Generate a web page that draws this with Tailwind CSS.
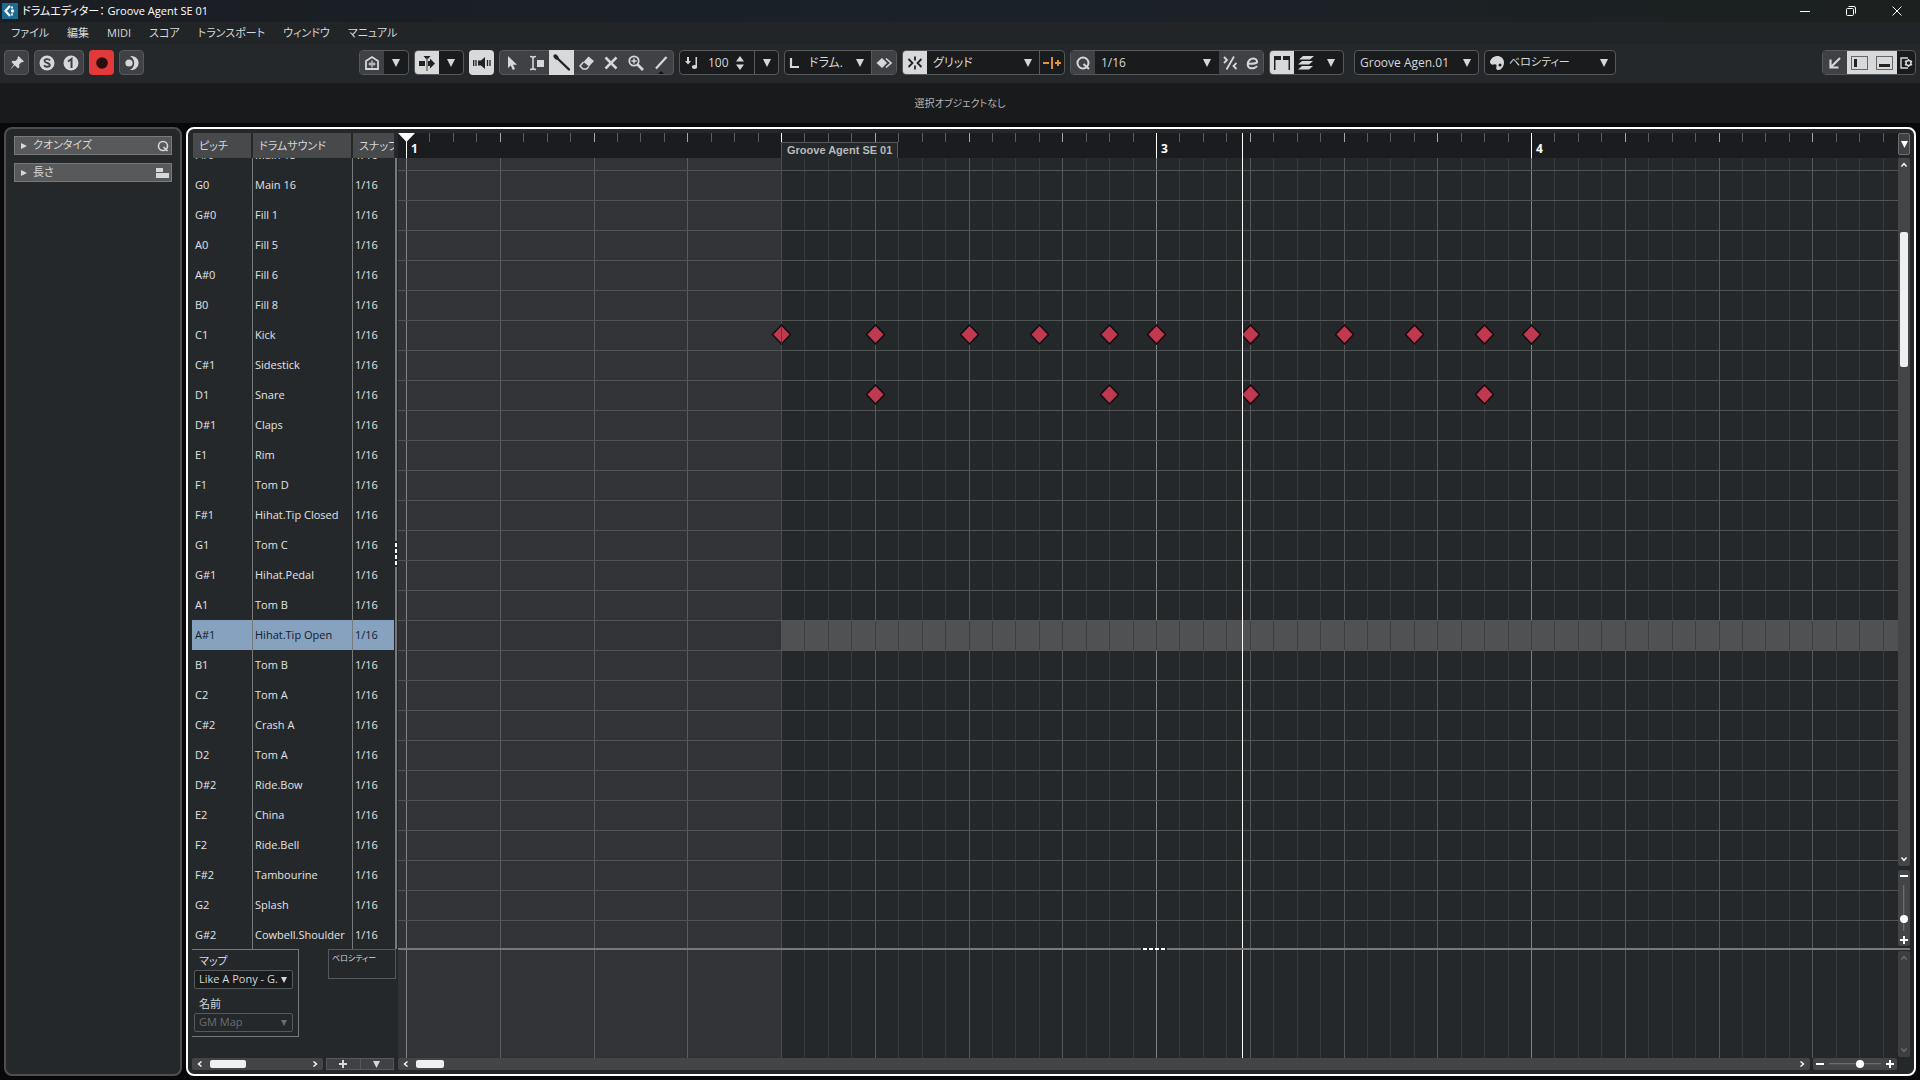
<!DOCTYPE html>
<html lang="ja">
<head>
    <meta charset="UTF-8">
    <meta name="viewport" content="width=device-width, initial-scale=1.0">
    <title>ドラムエディター： Groove Agent SE 01</title>
    <script src="https://cdn.jsdelivr.net/npm/@tailwindcss/browser@4"></script>
</head>
<body class="flex h-screen flex-col overflow-hidden bg-[#08080a] font-['Open_Sans','Noto_Sans_CJK_JP',sans-serif] text-[11px] text-[#d6d7d8] [font-feature-settings:'palt']">
    <!-- Shared icons -->
    <svg class="hidden">
        <symbol id="down" viewBox="0 0 8 8"><path d="M0 0h8L4 8z" fill="currentColor"/></symbol>
        <symbol id="plus" viewBox="0 0 8 8"><path d="M4 0v8M0 4h8" stroke="currentColor" stroke-width="2"/></symbol>
        <symbol id="minus" viewBox="0 0 8 8"><path d="M0 4h8" stroke="currentColor" stroke-width="2"/></symbol>
        <symbol id="chev" viewBox="0 0 8 8"><path d="M2.5 1.5 5.5 4 2.5 6.5" fill="none" stroke="currentColor" stroke-width="1.4"/></symbol>
    </svg>

    <!-- Title bar -->
    <header class="flex h-[22px] shrink-0 items-center justify-between bg-linear-to-r from-[#1a1e23] via-[#1a2129] to-[#1c201f] text-white">
        <div class="flex items-center gap-1 pl-0.5">
            <svg class="size-4" viewBox="0 0 16 16"><rect width="16" height="16" fill="#1d6a96"/><path d="M8 3 3.5 8 8 13" fill="none" stroke="#fff" stroke-width="2.2"/><path d="M10 3.5v2M10 10.5v2" stroke="#fff" stroke-width="1.8"/><circle cx="10.5" cy="8" r="1.7" fill="#fff"/></svg>
            <h1 class="text-[11px] whitespace-nowrap">ドラムエディター： Groove Agent SE 01</h1>
        </div>
        <div class="flex">
            <button class="flex h-[22px] w-[46px] items-center justify-center" aria-label="最小化"><svg class="size-3" viewBox="0 0 12 12"><path d="M1 6.5h10" stroke="#fff"/></svg></button>
            <button class="flex h-[22px] w-[46px] items-center justify-center" aria-label="元に戻す"><svg class="size-3" viewBox="0 0 12 12" fill="none" stroke="#fff"><rect x="1.5" y="3.5" width="7" height="7" rx="1"/><path d="M3.5 1.5h5.500a1.5 1.5 0 0 1 1.5 1.5v5.5"/></svg></button>
            <button class="flex h-[22px] w-[46px] items-center justify-center" aria-label="閉じる"><svg class="size-3" viewBox="0 0 12 12"><path d="m1.5 1.5 9 9m0-9-9 9" stroke="#fff"/></svg></button>
        </div>
    </header>

    <nav class="flex h-[22px] shrink-0 items-center gap-[18px] bg-[#212527] pl-[11px] text-[11px] whitespace-nowrap">
        <button>ファイル</button>
        <button>編集</button>
        <button>MIDI</button>
        <button>スコア</button>
        <button>トランスポート</button>
        <button>ウィンドウ</button>
        <button>マニュアル</button>
    </nav>

    <!-- Toolbar -->
    <div class="flex h-[39px] shrink-0 items-start gap-[5px] bg-[#25282b] px-1 pt-1.5 text-[12px] whitespace-nowrap">
        <button class="flex size-[25px] shrink-0 items-center justify-center rounded-sm border border-[#56595b] bg-[#3f4144]" aria-label="ピン"><svg class="size-4 shrink-0" viewBox="0 0 16 16" fill="currentColor"><path d="m9.5 1 5.5 5.5-1.5.8-.8-.2-2.5 2.5.2 2.6-1.4 1.3-3.3-3.3L1 15l3.9-5.4L2.4 7l1.3-1.3 2.6.2 2.5-2.5-.3-.9z"/></svg></button>
        <div class="flex h-[25px] w-[50px] shrink-0 rounded-sm border border-[#56595b] bg-[#3f4144]">
            <button class="flex flex-1 items-center justify-center" aria-label="ソロ"><svg class="size-4" viewBox="0 0 16 16"><circle cx="8" cy="8" r="7.5" fill="currentColor"/><path d="M11 5.5C10 3.6 5.5 3.6 5.5 6c0 2.3 5.3 1.5 5.3 4 0 2.3-4.5 2.3-5.8.3" fill="none" stroke="#3f4144" stroke-width="1.8"/></svg></button>
            <button class="flex flex-1 items-center justify-center" aria-label="パート編集"><svg class="size-4" viewBox="0 0 16 16"><circle cx="8" cy="8" r="7.5" fill="currentColor"/><path d="M5 6.5 8.5 4v9" fill="none" stroke="#3f4144" stroke-width="2"/></svg></button>
        </div>
        <button class="flex size-[25px] shrink-0 items-center justify-center rounded-sm bg-[#e23a3a]" aria-label="録音"><svg class="size-3" viewBox="0 0 12 12"><circle cx="6" cy="6" r="5.8" fill="#2a0c0c"/></svg></button>
        <button class="flex size-[25px] shrink-0 items-center justify-center rounded-sm border border-[#56595b] bg-[#3f4144]" aria-label="レトロスペクティブ録音"><svg class="size-4" viewBox="0 0 16 16" fill="currentColor"><path d="M6 1.2a7 7 0 1 1 0 13.6c2.500-1.200 4.200-3.600 4.200-6.800S8.500 2.400 6 1.200"/><circle cx="5" cy="8" r="3.6"/></svg></button>

        <div class="ml-[210px] flex h-[25px] w-[50px] shrink-0 overflow-hidden rounded-sm border border-[#56595b] bg-[#191b1d]">
            <button class="flex w-6 items-center justify-center bg-[#3f4144]" aria-label="ソロ設定"><svg class="size-4" viewBox="0 0 16 16" fill="none" stroke="currentColor"><path d="M2 14V6l6-4 6 4v8z" stroke-width="1.8"/><path d="M8 5.500v7M4.500 9h7M6 7.500v3M10 7.500v3" stroke-width="1.2"/></svg></button>
            <button class="flex flex-1 items-center justify-center" aria-label="メニュー"><svg class="size-2"><use href="#down"/></svg></button>
        </div>
        <div class="flex h-[25px] w-[50px] shrink-0 overflow-hidden rounded-sm border border-[#56595b] bg-[#191b1d]">
            <button class="flex w-6 items-center justify-center bg-[#d8d9db] text-[#222]" aria-label="オートスクロール"><svg class="size-4" viewBox="0 0 16 16" fill="currentColor"><path d="M0 6h6v5H0zM9 6h2V3.5l5 5-5 5V11H9zM4.5 1h7l-3 3.5h-1z"/><path d="M7.3 3h1.4v13H7.3z" fill="#666"/></svg></button>
            <button class="flex flex-1 items-center justify-center" aria-label="メニュー"><svg class="size-2"><use href="#down"/></svg></button>
        </div>
        <button class="flex size-[25px] shrink-0 items-center justify-center rounded-sm bg-[#d8d9db] text-[#222]" aria-label="試聴"><svg class="h-4 w-[18px]" viewBox="0 0 18 16" fill="currentColor"><path d="M5 5.5h3L12 2v12l-4-3.5H5z"/><path d="M.7 5v6M3 5v6M14.500 5v6M17 5v6" stroke="currentColor" stroke-width="1.3"/></svg></button>
        <div class="flex h-[25px] w-[175px] shrink-0 rounded-sm border border-[#56595b] bg-[#3f4144]">
            <button class="flex flex-1 items-center justify-center" aria-label="選択"><svg class="size-4" viewBox="0 0 16 16"><path d="M4 1v12l2.8-2.6L8.800 15l2.200-1-2-4.300h4z" fill="currentColor"/></svg></button>
            <button class="flex flex-1 items-center justify-center" aria-label="トリム"><svg class="size-4" viewBox="0 0 16 16"><path d="M1 1.5c2 0 3 .5 3 1.500v10c0 1-1 1.500-3 1.500M7 1.500c-2 0-3 .5-3 1.500M7 14.500c-2 0-3-.5-3-1.500" fill="none" stroke="currentColor" stroke-width="1.6"/><path d="M8 5h7v7H8z" fill="currentColor"/></svg></button>
            <button class="-my-px flex w-[25px] items-center justify-center bg-[#d8d9db] text-[#222]" aria-label="ドラムスティック"><svg class="size-[18px]" viewBox="0 0 18 18"><path d="m3.5 3.5 12.5 12" stroke="currentColor" stroke-width="2.4" stroke-linecap="round"/><ellipse cx="3" cy="3" rx="3" ry="2" transform="rotate(45 3 3)" fill="currentColor"/></svg></button>
            <button class="flex flex-1 items-center justify-center" aria-label="消しゴム"><svg class="size-4" viewBox="0 0 16 16"><path d="M9.5 1.5 15 6l-5 5.5L4.5 7z" fill="currentColor"/><path d="m4.5 7-3.5 4 3 3h3.5l2.5-2.5" fill="none" stroke="currentColor" stroke-width="1.5"/></svg></button>
            <button class="flex flex-1 items-center justify-center" aria-label="ミュート"><svg class="size-4" viewBox="0 0 16 16"><path d="m2.5 2.5 11 11m0-11-11 11" stroke="currentColor" stroke-width="2.5"/></svg></button>
            <button class="flex flex-1 items-center justify-center" aria-label="ズーム"><svg class="size-4" viewBox="0 0 16 16" fill="none" stroke="currentColor"><circle cx="6" cy="6" r="4.7" stroke-width="1.8"/><path d="m9.5 9.5 5.5 5.5" stroke-width="2.6"/><path d="M6 3.5v5M3.5 6h5" stroke-width="1.5"/></svg></button>
            <button class="relative flex flex-1 items-center justify-center" aria-label="ライン"><svg class="size-4" viewBox="0 0 16 16"><path d="M3 13.5 13.5 2" stroke="currentColor" stroke-width="2.2"/></svg><svg class="absolute bottom-0 h-[3px] w-1.5" viewBox="0 0 6 3"><path d="M3 0l3 3H0z" fill="#111"/></svg></button>
        </div>
        <div class="flex h-[25px] w-[100px] shrink-0 items-center rounded-sm border border-[#56595b] bg-[#191b1d]">
            <svg class="ml-1 size-4 shrink-0" viewBox="0 0 16 16" fill="currentColor"><path d="M3 2h2v4h2L4 9.5 1 6h2zM11.5 2H13v10h-1.500z"/><ellipse cx="10.5" cy="12" rx="2.7" ry="2"/></svg>
            <input type="text" value="100" aria-label="挿入ベロシティー" class="ml-2 w-6 bg-transparent outline-none">
            <svg class="ml-1 h-4 w-2 shrink-0" viewBox="0 0 8 16" fill="currentColor"><path d="m4 1 4 5.5H0zM4 15l4-5.5H0z"/></svg>
            <button class="ml-auto flex h-full w-6 items-center justify-center border-l border-[#56595b]" aria-label="メニュー"><svg class="size-2"><use href="#down"/></svg></button>
        </div>
        <div class="flex h-[25px] w-[113px] shrink-0 items-center overflow-hidden rounded-sm border border-[#56595b] bg-[#191b1d]">
            <svg class="ml-1 size-3 shrink-0" viewBox="0 0 12 12"><path d="M2 1v9h8" fill="none" stroke="currentColor" stroke-width="2.2"/></svg>
            <div class="relative h-full flex-1">
                <select class="size-full appearance-none pl-2 outline-none" aria-label="長さ"><option>ドラム.</option></select>
                <svg class="pointer-events-none absolute top-2 right-[7px] size-2"><use href="#down"/></svg>
            </div>
            <button class="flex h-full w-[25px] items-center justify-center border-l border-[#56595b] bg-[#3f4144]" aria-label="表示"><svg class="size-4" viewBox="0 0 16 16"><path d="m6 3 5 5-5 5-5.5-5z" fill="currentColor"/><path d="m10 3.5 5 4.5-5 4.5" fill="none" stroke="currentColor" stroke-width="1.6"/></svg></button>
        </div>
        <div class="flex h-[25px] w-[163px] shrink-0 overflow-hidden rounded-sm border border-[#56595b] bg-[#191b1d]">
            <button class="flex w-6 items-center justify-center bg-[#d8d9db] text-[#222]" aria-label="スナップ"><svg class="size-4" viewBox="0 0 16 16" fill="none" stroke="currentColor" stroke-width="1.8"><path d="M1.5 4 5.5 8l-4 4M14.5 4l-4 4 4 4M8 1.5v4M8 10.5v4"/></svg></button>
            <div class="relative h-full flex-1">
                <select class="size-full appearance-none pl-1.5 outline-none" aria-label="スナップタイプ"><option>グリッド</option></select>
                <svg class="pointer-events-none absolute top-2 right-[7px] size-2"><use href="#down"/></svg>
            </div>
            <button class="flex w-[25px] items-center justify-center border-l border-[#56595b] text-[#e8943a]" aria-label="相対グリッド"><svg class="h-4 w-5" viewBox="0 0 20 16"><path d="M1 8h6M13 8h6M16 5v6M10 2v12" stroke="currentColor" stroke-width="1.9"/></svg></button>
        </div>
        <div class="flex h-[25px] w-[194px] shrink-0 overflow-hidden rounded-sm border border-[#56595b] bg-[#191b1d]">
            <button class="flex w-6 items-center justify-center bg-[#3f4144]" aria-label="クオンタイズを適用"><svg class="size-4" viewBox="0 0 16 16" fill="none" stroke="currentColor" stroke-width="2"><circle cx="8" cy="8" r="5.5"/><path d="m8.5 9 5.5 5"/></svg></button>
            <div class="relative h-full flex-1">
                <select class="size-full appearance-none pl-1.5 outline-none" aria-label="クオンタイズプリセット"><option>1/16</option></select>
                <svg class="pointer-events-none absolute top-2 right-2 size-2"><use href="#down"/></svg>
            </div>
            <button class="flex w-[22px] items-center justify-center bg-[#3f4144]" aria-label="ソフトクオンタイズ"><svg class="size-[14px]" viewBox="0 0 14 14" fill="none" stroke="currentColor" stroke-width="1.8"><path d="m1 1 3 3-3 3M11 .5 3.500 13.500M13.500 7l-3 3 3 3"/></svg></button>
            <button class="flex w-[22px] items-center justify-center bg-[#3f4144]" aria-label="クオンタイズパネル"><svg class="size-[14px]" viewBox="0 0 14 14"><path d="M3 7.800c9 .2 9.500-1.300 9-3C11 2 7 1.500 4.500 4S2 11 5 12s6-.5 7-2" fill="none" stroke="currentColor" stroke-width="2"/></svg></button>
        </div>
        <div class="flex h-[25px] w-[75px] shrink-0 overflow-hidden rounded-sm border border-[#56595b] bg-[#191b1d]">
            <button class="flex w-6 items-center justify-center bg-[#d8d9db] text-[#222]" aria-label="パート境界"><svg class="size-4" viewBox="0 0 16 16" fill="currentColor"><path d="M0 1h7v4H1.500v10H0zM9 1h7v14h-1.500V5H9z"/></svg></button>
            <button class="flex flex-1 items-center justify-center" aria-label="レイヤー"><svg class="size-4" viewBox="0 0 16 16" fill="currentColor"><path d="M5 1h11l-4 3.500H1zM4 6h11l-4 3.500H0zM4 11h11l-4 3.500H0z"/></svg></button>
            <button class="flex flex-1 items-center justify-center" aria-label="メニュー"><svg class="size-2"><use href="#down"/></svg></button>
        </div>
        <div class="relative ml-[5px] h-[25px] w-[125px] shrink-0 rounded-sm border border-[#56595b] bg-[#191b1d]">
            <select class="size-full appearance-none pl-[5px] outline-none" aria-label="編集中のパート"><option>Groove Agen.01</option></select>
            <svg class="pointer-events-none absolute top-2 right-[7px] size-2"><use href="#down"/></svg>
        </div>
        <div class="relative flex h-[25px] w-[132px] shrink-0 items-center rounded-sm border border-[#56595b] bg-[#191b1d]">
            <svg class="ml-1 size-4 shrink-0" viewBox="0 0 16 16"><path d="M8 1c4 0 7 2.5 7 6.500S12 15 9.500 15 7 13 7.500 11.500 7 9 5 9.500 1 9 1 7s3-6 7-6" fill="currentColor"/><circle cx="11" cy="10" r="1.5" fill="#191b1d"/></svg>
            <select class="h-full flex-1 appearance-none pl-1 text-[11px] outline-none" aria-label="イベントカラー"><option>ベロシティー</option></select>
            <svg class="pointer-events-none absolute top-2 right-[7px] size-2"><use href="#down"/></svg>
        </div>
        <div class="ml-auto flex h-[25px] w-[94px] shrink-0 overflow-hidden rounded-sm border border-[#56595b] bg-[#191b1d]">
            <button class="flex w-6 items-center justify-center bg-[#3f4144]" aria-label="下ゾーンで開く"><svg class="size-3" viewBox="0 0 12 12" fill="none" stroke="currentColor" stroke-width="2.2"><path d="M11 1 2 10M1.5 2.500v8h8"/></svg></button>
            <button class="flex w-[25px] items-center justify-center bg-[#d8d9db]" aria-label="左ゾーン"><svg class="h-[14px] w-[17px]" viewBox="0 0 17 14"><rect x=".5" y=".5" width="16" height="13" fill="none" stroke="#666"/><path d="M3 3h3v8H3z" fill="#222"/></svg></button>
            <button class="flex w-[25px] items-center justify-center bg-[#d8d9db]" aria-label="下ゾーン"><svg class="h-[14px] w-[17px]" viewBox="0 0 17 14"><rect x=".5" y=".5" width="16" height="13" fill="none" stroke="#666"/><path d="M3 8h11v3H3z" fill="#222"/></svg></button>
            <button class="flex flex-1 items-center justify-center" aria-label="レイアウト設定"><svg class="h-3 w-[13px]" viewBox="0 0 13 12" fill="none" stroke="currentColor"><path d="M8 1H1v10h7" stroke-width="1.4"/><circle cx="8.5" cy="6" r="2.5" stroke-width="1.5"/><path d="M8.5 2v1.5M8.5 8.5V10M5 4l1.3.8M5 8l1.3-.8M12 4l-1.3.8M12 8l-1.3-.8" stroke-width="1.5"/></svg></button>
        </div>
    </div>

    <!-- Info line -->
    <div class="flex h-10 shrink-0 items-center justify-center bg-[#191a1b] text-[10px] text-[#b4b5b6]">選択オブジェクトなし</div>

    <main class="flex min-h-0 flex-1 gap-1 px-1 py-1">
        <!-- Inspector -->
        <aside class="flex w-[178px] shrink-0 flex-col gap-2 rounded-lg border-2 border-[#4c4e50] bg-[#24282b] px-2 py-[7px]">
            <button class="flex h-[19px] items-center gap-1.5 border border-[#77797b] bg-[#57595b] pr-0.5 pl-1">
                <svg class="ml-0.5 size-[6px]" viewBox="0 0 6 6"><path d="M0 0v6l6-3z" fill="currentColor"/></svg>
                クオンタイズ
                <svg class="ml-auto size-3" viewBox="0 0 12 12" fill="none" stroke="currentColor" stroke-width="1.6"><circle cx="6" cy="6" r="4.5"/><path d="m6.5 7 4 4"/></svg>
            </button>
            <button class="flex h-[19px] items-center gap-1.5 border border-[#77797b] bg-[#57595b] pr-0.5 pl-1">
                <svg class="ml-0.5 size-[6px]" viewBox="0 0 6 6"><path d="M0 0v6l6-3z" fill="currentColor"/></svg>
                長さ
                <svg class="ml-auto h-3 w-[14px]" viewBox="0 0 14 12" fill="currentColor"><path d="M1 1h7v4H1zM1 6h13v5H1z"/></svg>
            </button>
        </aside>

        <section class="flex min-w-0 flex-1 rounded-lg border-2 border-white bg-[#24282b] p-1">
            <!-- Drum list -->
            <div class="flex w-[202px] shrink-0 flex-col">
                <div class="flex h-[25px] shrink-0 gap-0.5 pl-px leading-[25px] whitespace-nowrap">
                    <div class="w-[58px] bg-[#48494b] pl-1.5">ピッチ</div>
                    <div class="w-[98px] bg-[#48494b] pl-1.5">ドラムサウンド</div>
                    <div class="min-w-0 flex-1 overflow-hidden bg-[#48494b] pl-1.5">スナップ</div>
                </div>
                <div class="min-h-0 flex-1 overflow-hidden">
                    <!-- List is scrolled by 18px -->
                    <table class="-mt-[18px] w-full table-fixed border-separate border-spacing-0 text-left whitespace-nowrap" aria-label="ドラムサウンド">
                        <colgroup><col class="w-[61px]"><col class="w-[100px]"><col></colgroup>
                        <tbody id="rows"></tbody>
                    </table>
                </div>
                <div class="flex h-[109px] shrink-0 items-start justify-between">
                    <div class="flex w-[107px] flex-col border-y border-r border-[#77797b] pt-[3px] pr-[5px] pb-1 pl-0.5">
                        <label for="map" class="h-[17px] pl-[5px] leading-4">マップ</label>
                        <div class="relative h-[19px] rounded-xs border border-[#56595b] bg-[#191b1d]">
                            <select id="map" class="block size-full appearance-none pl-1 outline-none"><option>Like A Pony - G.</option></select>
                            <svg class="pointer-events-none absolute top-[6px] right-[5px] size-[6px]"><use href="#down"/></svg>
                        </div>
                        <label for="names" class="mt-[7px] h-[17px] pl-[5px] leading-4">名前</label>
                        <div class="relative h-[19px] rounded-xs border border-[#56595b] text-[#6b6e70]">
                            <select id="names" disabled class="block size-full appearance-none pl-1 outline-none"><option>GM Map</option></select>
                            <svg class="pointer-events-none absolute top-[6px] right-[5px] size-[6px]"><use href="#down"/></svg>
                        </div>
                    </div>
                    <div class="-mr-0.5 h-[30px] w-[68px] border border-[#56595b] pl-[3px] text-[8px] leading-4">ベロシティー</div>
                </div>
                <div class="flex h-3 shrink-0 gap-[3px]">
                    <div class="flex w-[131px] items-center rounded-xs bg-[#434547] px-1 text-white">
                        <svg class="size-2 rotate-180"><use href="#chev"/></svg>
                        <div class="ml-1.5 h-2 w-9 rounded-xs bg-[#eeeff0]"></div>
                        <svg class="ml-auto size-2"><use href="#chev"/></svg>
                    </div>
                    <div class="flex flex-1 border border-[#56595b] bg-[#3f4144]">
                        <button class="flex flex-1 items-center justify-center border-r border-[#56595b]" aria-label="レーンを追加"><svg class="size-2"><use href="#plus"/></svg></button>
                        <button class="flex flex-1 items-center justify-center" aria-label="レーンメニュー"><svg class="size-[7px]"><use href="#down"/></svg></button>
                    </div>
                </div>
            </div>

            <!-- Vertical divider -->
            <div class="flex w-1 shrink-0 flex-col items-center pt-[25px] pb-[121px]">
                <div class="w-0.5 flex-1 bg-[#77797b]"></div>
                <div class="flex h-[26px] shrink-0 flex-col items-center justify-center gap-0.5">
                    <i class="h-1 w-0.5 bg-white"></i><i class="h-1 w-0.5 bg-white"></i><i class="h-1 w-0.5 bg-white"></i><i class="h-1 w-0.5 bg-white"></i>
                </div>
                <div class="w-0.5 flex-1 bg-[#77797b]"></div>
            </div>

            <!-- Event display -->
            <div class="flex min-w-0 flex-1 flex-col">
                <div class="flex h-[25px] shrink-0">
                    <div class="relative min-w-0 flex-1 overflow-hidden bg-[#1b1c20] text-[12px] font-bold text-white">
                        <svg id="ruler" class="absolute size-full"></svg>
                        <span class="absolute top-2 left-[13px] leading-4">1</span>
                        <span class="absolute top-[9px] left-[383px] h-4 border border-b-0 border-[#56595b] bg-[#24282b] px-[5px] font-['Liberation_Sans',sans-serif] text-[11px] leading-[15px] text-[#b8b9ba]">Groove Agent SE 01</span>
                        <span class="absolute top-2 left-[763px] leading-4">3</span>
                        <span class="absolute top-2 left-[1138px] leading-4">4</span>
                    </div>
                    <button class="flex h-[22px] w-3 items-center justify-center rounded-xs border border-[#6b6d6f] bg-[#3f4144] text-white" aria-label="ルーラー設定"><svg class="size-[7px] shrink-0"><use href="#down"/></svg></button>
                </div>
                <div class="flex min-h-0 flex-1">
                    <svg id="grid" class="h-full min-w-0 flex-1"></svg>
                    <div class="flex w-3 shrink-0 flex-col gap-1 pb-0.5 text-white">
                        <div class="flex flex-1 flex-col items-center rounded-xs bg-[#434547] py-[3px]">
                            <svg class="size-2 -rotate-90"><use href="#chev"/></svg>
                            <div class="mt-[63px] h-[135px] w-2 rounded-xs bg-[#eeeff0]"></div>
                            <svg class="mt-auto size-2 rotate-90"><use href="#chev"/></svg>
                        </div>
                        <div class="flex h-[76px] flex-col items-center justify-between rounded-xs bg-[#434547] py-0.5">
                            <svg class="size-2"><use href="#minus"/></svg>
                            <input type="range" value="78" aria-label="縦ズーム" class="h-[46px] w-2 appearance-none bg-linear-to-r from-transparent from-38% via-[#77797b] via-38% to-transparent to-62% [writing-mode:vertical-lr] [&::-webkit-slider-thumb]:size-2 [&::-webkit-slider-thumb]:appearance-none [&::-webkit-slider-thumb]:rounded-full [&::-webkit-slider-thumb]:bg-white">
                            <svg class="size-2"><use href="#plus"/></svg>
                        </div>
                    </div>
                </div>
                <div class="flex h-0.5 shrink-0 items-center justify-center bg-[#77797b]">
                    <div class="flex gap-0.5 bg-[#24282b] px-0.5">
                        <i class="h-0.5 w-1 bg-white"></i><i class="h-0.5 w-1 bg-white"></i><i class="h-0.5 w-1 bg-white"></i><i class="h-0.5 w-1 bg-white"></i>
                    </div>
                </div>
                <div class="flex h-[108px] shrink-0">
                    <svg id="lane" class="h-full min-w-0 flex-1"></svg>
                    <div class="my-px flex w-3 shrink-0 flex-col items-center justify-between rounded-xs bg-[#3c3e40] py-[3px] text-[#6b6d6f]">
                        <svg class="size-2 -rotate-90"><use href="#chev"/></svg>
                        <svg class="size-2 rotate-90"><use href="#chev"/></svg>
                    </div>
                </div>
                <div class="flex h-3 shrink-0 gap-[3px] pr-[13px] text-white">
                    <div class="flex flex-1 items-center rounded-xs bg-[#434547] px-1">
                        <svg class="size-2 rotate-180"><use href="#chev"/></svg>
                        <div class="ml-1.5 h-2 w-7 rounded-xs bg-[#eeeff0]"></div>
                        <svg class="ml-auto size-2"><use href="#chev"/></svg>
                    </div>
                    <div class="flex w-[84px] items-center justify-between rounded-xs bg-[#434547] px-[3px]">
                        <svg class="size-2"><use href="#minus"/></svg>
                        <input type="range" value="61" aria-label="横ズーム" class="h-2 w-[52px] appearance-none bg-linear-to-b from-transparent from-38% via-[#77797b] via-38% to-transparent to-62% [&::-webkit-slider-thumb]:size-2 [&::-webkit-slider-thumb]:appearance-none [&::-webkit-slider-thumb]:rounded-full [&::-webkit-slider-thumb]:bg-white">
                        <svg class="size-2"><use href="#plus"/></svg>
                    </div>
                </div>
            </div>
        </section>
    </main>

    <script>
        const drums = [
            ["F#0", "Main 15"], ["G0", "Main 16"], ["G#0", "Fill 1"], ["A0", "Fill 5"], ["A#0", "Fill 6"], ["B0", "Fill 8"],
            ["C1", "Kick"], ["C#1", "Sidestick"], ["D1", "Snare"], ["D#1", "Claps"], ["E1", "Rim"], ["F1", "Tom D"],
            ["F#1", "Hihat.Tip Closed"], ["G1", "Tom C"], ["G#1", "Hihat.Pedal"], ["A1", "Tom B"], ["A#1", "Hihat.Tip Open"],
            ["B1", "Tom B"], ["C2", "Tom A"], ["C#2", "Crash A"], ["D2", "Tom A"], ["D#2", "Ride.Bow"], ["E2", "China"],
            ["F2", "Ride.Bell"], ["F#2", "Tambourine"], ["G2", "Splash"], ["G#2", "Cowbell.Shoulder"],
        ];
        const selected = 16;
        const rowHeight = 30;
        const scrolled = 18;

        document.getElementById("rows").innerHTML = drums.map(([pitch, name], i) => `
            <tr class="h-[30px] ${i === selected ? "bg-[#86a2bf] text-[#10202f]" : "text-[#e2e3e4]"}">
                <td class="border-r border-[#77797b] p-0 pl-[3px]">${pitch}</td>
                <td class="border-r border-[#77797b] p-0 pl-0.5">${name}</td>
                <td class="p-0 pl-0.5">1/16</td>
            </tr>`).join("");

        // Time axis: bar 1 at x = 8, 16 steps of 1/16 per bar
        const startX = 8;
        const stepWidth = 375 / 16;
        const steps = 160;
        const partStart = 16;
        const cursorX = 844;
        const xOf = (s) => Math.round(startX + s * stepWidth);
        const rect = (x, y, w, h, fill) => `<rect x="${x}" y="${y}" width="${w}" height="${h}" fill="${fill}"/>`;

        function verticals() {
            let out = rect(0, 0, xOf(partStart), "100%", "#323336");
            for (let s = 0; s < steps; s++) {
                const beat = s % 4 === 0;
                if (s < partStart && !beat) continue;
                let color = "#373b3e";
                if (beat) color = s < partStart ? "#5b5c5f" : "#56595b";
                if (s % 16 === 0) color = s === partStart ? "#4a4d4f" : "#808283";
                out += rect(xOf(s), 0, 1, "100%", color);
            }
            return out;
        }

        // Ruler
        let ruler = "";
        for (let s = 0; s < steps; s++) {
            const bar = s % 16 === 0;
            const color = bar ? "#ffffff" : s % 4 === 0 ? "#a5a6a8" : "#5a5c5f";
            ruler += rect(xOf(s), 0, 1, bar && s !== partStart ? 25 : 9, color);
        }
        ruler += `<path d="M0 0h17L8.5 9z" fill="#fff"/>` + rect(cursorX, 0, 1, "100%", "#fff");
        document.getElementById("ruler").innerHTML = ruler;

        // Note grid
        let grid = verticals();
        const selectedY = selected * rowHeight - scrolled;
        grid += rect(xOf(partStart), selectedY, "100%", rowHeight, "#505152");
        for (let s = partStart + 1; s < steps; s++) grid += rect(xOf(s), selectedY, 1, rowHeight, "#3c3e40");
        for (let i = 1; i < drums.length; i++) grid += rect(0, i * rowHeight - scrolled, "100%", 1, "#515455");
        const notes = { 6: [0, 4, 8, 11, 14, 16, 20, 24, 27, 30, 32], 8: [4, 14, 20, 30] };
        for (const row in notes) {
            for (const s of notes[row]) {
                const cx = xOf(s + partStart) + 0.5;
                const cy = row * rowHeight - scrolled + 14.5;
                grid += `<path d="M${cx} ${cy - 9.5}l9 9.5-9 9.5-9-9.5z" fill="#bf3a50" stroke="#1a0a0c" stroke-width="1.5"/>`;
            }
        }
        // Part border stays visible over the first note
        grid += rect(xOf(partStart), 168, 1, 18, "#6b3038");
        grid += rect(cursorX, 0, 1, "100%", "#fff");
        document.getElementById("grid").innerHTML = grid;

        // Controller lane
        document.getElementById("lane").innerHTML = verticals() + rect(cursorX, 0, 1, "100%", "#fff");
    </script>
</body>
</html>
